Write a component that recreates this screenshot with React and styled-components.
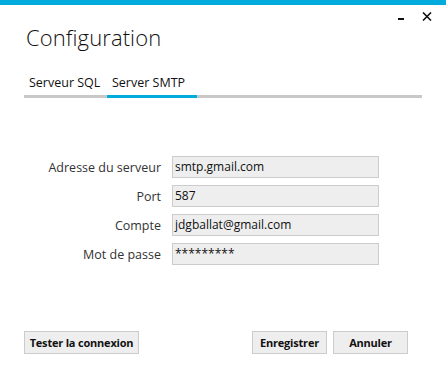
import React from "react";
import styled, { createGlobalStyle } from "styled-components";

const GlobalStyle = createGlobalStyle`
  html, body {
    margin: 0;
    padding: 0;
    background: #ffffff;
  }
  body {
    font-family: "Open Sans", "Noto Sans", "Liberation Sans", sans-serif;
  }
`;

const fields = [
  { label: "Adresse du serveur", value: "smtp.gmail.com" },
  { label: "Port", value: "587" },
  { label: "Compte", value: "jdgballat@gmail.com" },
  { label: "Mot de passe", value: "*********" },
];

const App = () => {
  return (
    <Window>
      <GlobalStyle />
      <Controls>
        <Minimize />
        <Close>
          <svg width="10" height="9" viewBox="0 0 10 9">
            <path d="M1 0.5 L9 8.5 M9 0.5 L1 8.5" stroke="#111" strokeWidth="1.6" />
          </svg>
        </Close>
      </Controls>
      <Title>Configuration</Title>
      <Tabs>
        <Tab>Serveur SQL</Tab>
        <Tab active>Server SMTP</Tab>
      </Tabs>
      <TabTrack>
        <TrackIndicator />
      </TabTrack>
      <Form>
        {fields.map((f) => (
          <React.Fragment key={f.label}>
            <Label>{f.label}</Label>
            <Field>{f.value}</Field>
          </React.Fragment>
        ))}
      </Form>
      <Footer>
        <Button wide>Tester la connexion</Button>
        <RightGroup>
          <Button>Enregistrer</Button>
          <Button>Annuler</Button>
        </RightGroup>
      </Footer>
    </Window>
  );
};

export default App;

const Window = styled.div`
  width: 446px;
  height: 367px;
  box-sizing: border-box;
  border-top: 5px solid #01abdb;
  display: flex;
  flex-direction: column;
  background: #fff;
`;

const Controls = styled.div`
  display: flex;
  justify-content: flex-end;
  align-items: flex-start;
  gap: 18px;
  height: 10px;
  padding: 7px 14px 0 0;
`;

const Minimize = styled.div`
  width: 6px;
  height: 2px;
  background: #111;
  margin-top: 6px;
`;

const Close = styled.div`
  display: flex;
  svg {
    display: block;
  }
`;

const Title = styled.h1`
  margin: 0;
  padding: 0 0 0 26px;
  font-family: "Open Sans", "Noto Sans", sans-serif;
  font-weight: 300;
  font-size: 22px;
  line-height: 30px;
  color: #111;
  letter-spacing: 0.1px;
`;

const Tabs = styled.div`
  display: flex;
  margin: 20px 0 0 24px;
  height: 21px;
  align-items: center;
`;

const Tab = styled.div`
  font-size: 12.5px;
  color: #111;
  padding: 0 5px;
  width: ${(p) => (p.active ? "80px" : "73px")};
`;

const TabTrack = styled.div`
  margin: 2px 24px 0 24px;
  height: 3px;
  background: #c8c8c8;
`;

const TrackIndicator = styled.div`
  margin-left: 83px;
  width: 90px;
  height: 3px;
  background: #01abdb;
`;

const Form = styled.div`
  display: grid;
  grid-template-columns: 137px 207px;
  column-gap: 11px;
  row-gap: 7px;
  margin: 58px 0 0 24px;
  align-items: center;
`;

const Label = styled.div`
  text-align: right;
  font-size: 12.5px;
  color: #333;
`;

const Field = styled.div`
  box-sizing: border-box;
  height: 22px;
  border: 1px solid #cccccc;
  background: #eeeeee;
  font-size: 12px;
  color: #111;
  padding: 0 0 0 2px;
  line-height: 20px;
`;

const Footer = styled.div`
  margin-top: auto;
  display: flex;
  justify-content: space-between;
  padding: 0 38px 13px 24px;
`;

const RightGroup = styled.div`
  display: flex;
  gap: 6px;
`;

const Button = styled.button`
  box-sizing: border-box;
  width: ${(p) => (p.wide ? "115px" : "75px")};
  height: 23px;
  border: 1px solid #cccccc;
  background: #eeeeee;
  font-family: "Open Sans", "Noto Sans", sans-serif;
  font-weight: 700;
  font-size: 11px;
  letter-spacing: -0.2px;
  color: #111;
  padding: 0;
  cursor: pointer;
`;
